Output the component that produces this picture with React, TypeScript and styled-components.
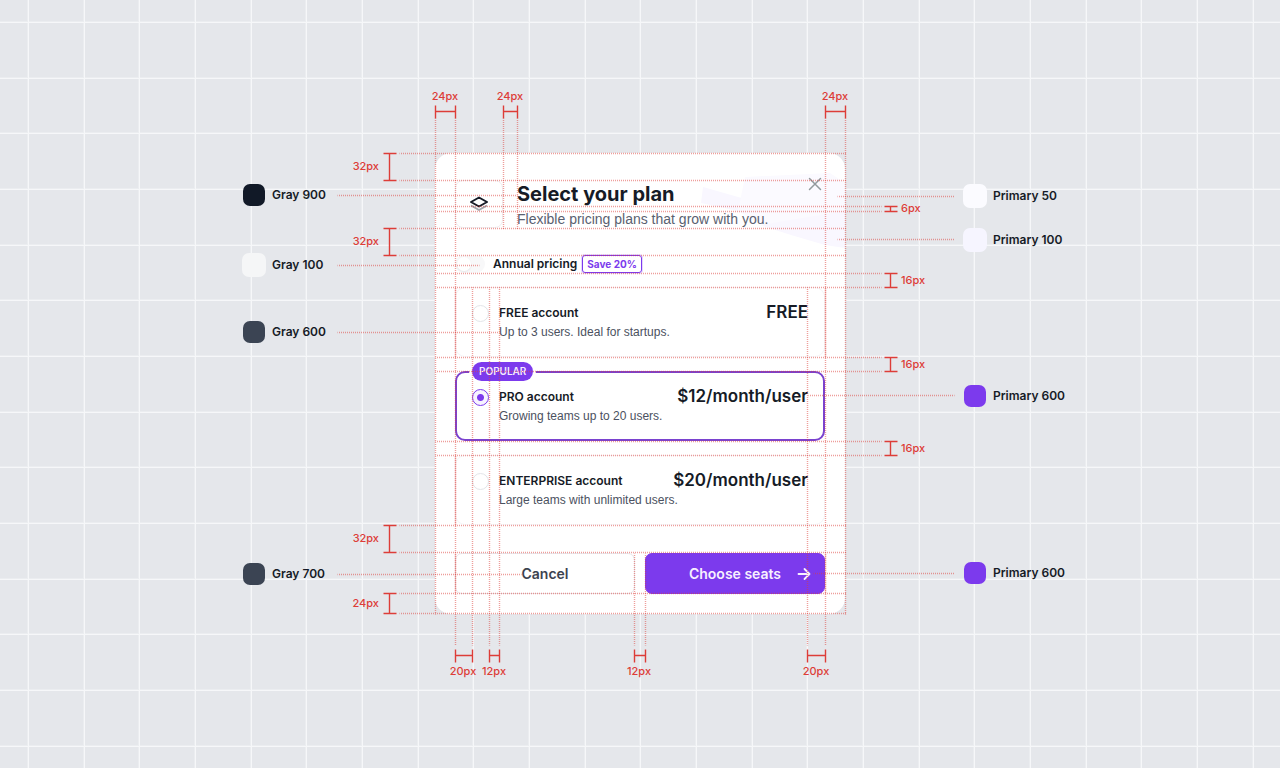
import React from "react";
import styled, { createGlobalStyle } from "styled-components";

const red = "#dd3d38";
const purple = "#7c3aed";
const ink = "#161b26";

const GlobalStyle = createGlobalStyle`
  *, *::before { box-sizing: border-box; }
  body {
    margin: 0;
    background: #e5e7eb;
    color: ${ink};
    font-family: Inter, "Liberation Sans", sans-serif;
  }
  button, input { font: inherit; margin: 0; }
`;

const Page = styled.main`
  position: relative;
  display: flex;
  align-items: center;
  justify-content: center;
  min-height: 100vh;
  padding-bottom: 1px;
  overflow: hidden;
`;

const Backdrop = styled.svg`
  position: absolute;
  inset: 0;
  width: 100%;
  height: 100%;
`;

const Artboard = styled.div`
  position: relative;
  width: 410px;
`;

const Card = styled.form`
  position: relative;
  display: flex;
  flex-direction: column;
  padding: 27px 20px 20px;
  border-radius: 16px;
  background: #fff;
  overflow: hidden;
`;

const Decoration = styled.svg`
  position: absolute;
  top: 0;
  right: 0;
  width: 160px;
  height: 130px;
`;

const Header = styled.header`
  position: relative;
  display: flex;
  gap: 14px;
  height: 48px;
`;

const IconTile = styled.div`
  display: flex;
  align-items: center;
  justify-content: center;
  width: 48px;
  height: 48px;
  border: 1px solid #f1eff1;
  border-radius: 8px;
`;

const Heading = styled.div`
  flex: 1;
  white-space: nowrap;
`;

const Title = styled.h1`
  margin: 0;
  font-size: 20px;
  font-weight: 700;
  line-height: 28px;
`;

const Subtitle = styled.p`
  margin: 0;
  color: #5a6170;
  font-family: "Liberation Sans", sans-serif;
  font-size: 14px;
  line-height: 22px;
`;

const CloseButton = styled.button`
  position: absolute;
  top: -4px;
  right: 2px;
  display: flex;
  padding: 0;
  border: 0;
  background: none;
`;

const BillingRow = styled.div`
  display: flex;
  align-items: center;
  height: 18px;
  margin-top: 27px;
`;

const Switch = styled.input`
  appearance: none;
  width: 30px;
  height: 18px;
  border-radius: 9px;
  background: #f8f8f9;

  &::before {
    content: "";
    display: block;
    width: 14px;
    height: 14px;
    margin: 2px;
    border-radius: 50%;
    background: #fff;
    box-shadow: 0 1px 2px #10182814;
  }
`;

const BillingLabel = styled.label`
  margin: 0 5px 0 8px;
  font-size: 12px;
  font-weight: 600;
  line-height: 20px;
`;

const SaveBadge = styled.span`
  height: 18px;
  padding: 0 4px;
  border: 1px solid ${purple};
  border-radius: 3px;
  box-shadow: 0 0 0 1px #7c3aed33;
  color: ${purple};
  font-size: 10px;
  font-weight: 700;
  line-height: 16px;
`;

const Plans = styled.fieldset`
  display: flex;
  flex-direction: column;
  gap: 14px;
  min-width: 0;
  margin: 14px 0 0;
  padding: 0;
  border: 0;
`;

const Plan = styled.label<{ $selected?: boolean }>`
  position: relative;
  display: flex;
  gap: 10px;
  height: 70px;
  padding: 16px 17px;
  border-radius: 10px;
  box-shadow: inset 0 0 0 ${(p) => (p.$selected ? `2px #7a42cf` : "1px #f6f6f8")};
`;

const Radio = styled.input`
  appearance: none;
  flex: none;
  align-self: flex-start;
  width: 17px;
  height: 19px;
  padding-top: 2px;

  &::before {
    content: "";
    display: block;
    width: 17px;
    height: 17px;
    border: 1px solid #e3e5e9;
    border-radius: 50%;
    background: #fff;
  }

  &:checked::before {
    border-color: ${purple};
    background: radial-gradient(circle, ${purple} 3px, #f7f3ff 4px);
  }
`;

const PlanText = styled.span`
  flex: 1;
  display: flex;
  flex-direction: column;
  min-width: 0;
  white-space: nowrap;
`;

const PlanName = styled.span`
  font-size: 12px;
  font-weight: 600;
  line-height: 19px;
`;

const PlanNote = styled.span`
  color: #4b5160;
  font-family: "Liberation Sans", sans-serif;
  font-size: 12px;
  line-height: 21px;
`;

const Price = styled.strong`
  font-size: 17px;
  font-weight: 600;
  line-height: 18px;
`;

const PopularBadge = styled.span`
  position: absolute;
  top: -9px;
  left: 17px;
  padding: 0 7px;
  border-radius: 10px;
  background: ${purple};
  box-shadow: 0 0 0 3px #fff;
  color: #f4ebff;
  font-size: 10px;
  font-weight: 600;
  line-height: 19px;
`;

const Actions = styled.div`
  display: grid;
  grid-template-columns: 1fr 1fr;
  gap: 10px;
  margin-top: 28px;
`;

const ActionButton = styled.button<{ $primary?: boolean }>`
  position: relative;
  display: flex;
  align-items: center;
  justify-content: center;
  height: 41px;
  padding: 0;
  border: 1px solid ${(p) => (p.$primary ? purple : "#e8e8ec")};
  border-radius: 7px;
  background: ${(p) => (p.$primary ? purple : "#fff")};
  color: ${(p) => (p.$primary ? "#f7f0ff" : "#3c4350")};
  font-size: 14px;
  font-weight: 600;
`;

const ArrowSlot = styled.span`
  position: absolute;
  right: 13px;
  display: flex;
`;

const Guides = styled.svg`
  position: absolute;
  inset: 0;
  width: 100%;
  height: 100%;
  overflow: visible;
  pointer-events: none;
`;

const Measure = styled.span<{ $x: number; $y: number; $anchor: string }>`
  position: absolute;
  left: ${(p) => p.$x}px;
  top: ${(p) => p.$y}px;
  transform: translate(${(p) => p.$anchor}, -50%);
  color: ${red};
  font-size: 11px;
  font-weight: 500;
  line-height: 14px;
`;

const Swatch = styled.div<{ $side: "left" | "right"; $y: number }>`
  position: absolute;
  left: ${(p) => (p.$side === "left" ? -193 : 528)}px;
  top: ${(p) => p.$y - 12}px;
  display: flex;
  align-items: center;
  gap: 6px;
  font-size: 12px;
  font-weight: 600;
  line-height: 24px;
  white-space: nowrap;
`;

const Chip = styled.span<{ $color: string; $light?: boolean }>`
  width: ${(p) => (p.$light ? 24 : 22)}px;
  height: ${(p) => (p.$light ? 24 : 22)}px;
  margin: ${(p) => (p.$light ? 0 : 1)}px;
  border-radius: 7px;
  background: ${(p) => p.$color};
`;

type Line = [number, number, number];

// Guides are [position, start, end], measured from the card's top left corner.
const verticals: Line[] = [
  [0, -35, 461], [20, -35, 492], [68, -35, 76], [82, -35, 76],
  [390, -35, 492], [410, -35, 461], [37, 134, 492], [54, 134, 492],
  [64, 134, 492], [199, 400, 492], [210, 400, 492], [372, 134, 492],
];
const horizontals: Line[] = [
  [0, -36, 411], [27, -36, 411], [53, 0, 446], [58, 0, 446],
  [75, -36, 411], [102, -36, 411], [120, 0, 446], [134, 0, 446],
  [204, 0, 446], [218, 0, 446], [288, 0, 446], [302, 0, 446],
  [372, -36, 411], [399, -36, 411], [440, -36, 411], [460, -36, 411],
];
const leaders: Line[] = [
  [42, -98, 82], [112, -98, 44], [179, -98, 64], [421, -98, 86],
  [43, 402, 519], [86, 402, 519], [242, 373, 519], [420, 378, 519],
];
const edges: Line[] = [
  [20, 134, 204], [20, 302, 372], [20, 400, 440],
  [390, 134, 204], [390, 400, 440],
];

type Span = { from: number; to: number; label: string };
const topSpans: Span[] = [
  { from: 0, to: 20, label: "24px" },
  { from: 68, to: 82, label: "24px" },
  { from: 390, to: 410, label: "24px" },
];
const bottomSpans: Span[] = [
  { from: 20, to: 37, label: "20px" },
  { from: 54, to: 64, label: "12px" },
  { from: 199, to: 210, label: "12px" },
  { from: 372, to: 390, label: "20px" },
];
const leftSpans: Span[] = [
  { from: 0, to: 27, label: "32px" },
  { from: 75, to: 102, label: "32px" },
  { from: 372, to: 399, label: "32px" },
  { from: 440, to: 460, label: "24px" },
];
const rightSpans: Span[] = [
  { from: 53, to: 58, label: "6px" },
  { from: 120, to: 134, label: "16px" },
  { from: 204, to: 218, label: "16px" },
  { from: 288, to: 302, label: "16px" },
];

const mid = (s: Span) => Math.floor((s.from + s.to) / 2);
const across = (s: Span, y: number) =>
  `M${s.from} ${y}H${s.to}M${s.from} ${y - 6}v13M${s.to} ${y - 6}v13`;
const down = (s: Span, x: number) =>
  `M${x} ${s.from}V${s.to}M${x - 6} ${s.from}h13M${x - 6} ${s.to}h13`;

const swatches = [
  { name: "Gray 900", color: "#111927", side: "left", y: 42 },
  { name: "Gray 100", color: "#f5f6f7", side: "left", y: 112, light: true },
  { name: "Gray 600", color: "#3b4453", side: "left", y: 179 },
  { name: "Gray 700", color: "#3b4453", side: "left", y: 421 },
  { name: "Primary 50", color: "#fbfbff", side: "right", y: 43, light: true },
  { name: "Primary 100", color: "#f6f5ff", side: "right", y: 87, light: true },
  { name: "Primary 600", color: purple, side: "right", y: 243 },
  { name: "Primary 600", color: purple, side: "right", y: 420 },
] as const;

const plans = [
  { id: "free", name: "FREE account", note: "Up to 3 users. Ideal for startups.", price: "FREE" },
  { id: "pro", name: "PRO account", note: "Growing teams up to 20 users.", price: "$12/month/user", popular: true },
  { id: "enterprise", name: "ENTERPRISE account", note: "Large teams with unlimited users.", price: "$20/month/user" },
];

const gridStops = Array.from({ length: 60 }, (_, i) => Math.round((i * 501) / 9));

function Grid() {
  return (
    <Backdrop aria-hidden="true">
      <g fill="#f6f7f9">
        {gridStops.map((s) => (
          <React.Fragment key={s}>
            <rect x={s + 28} y="0" width="1" height="100%" />
            <rect x="0" y={s + 22} width="100%" height="1" />
          </React.Fragment>
        ))}
      </g>
      <g fill="#f6f7f9" opacity="0.4">
        {gridStops.map((s) => (
          <React.Fragment key={s}>
            <rect x={s + 27} y="0" width="2" height="100%" />
            <rect x="0" y={s + 21} width="100%" height="2" />
          </React.Fragment>
        ))}
      </g>
    </Backdrop>
  );
}

function Annotations() {
  return (
    <>
      <Guides aria-hidden="true">
        <g transform="translate(0.5 0.5)" fill="none" stroke={red} strokeWidth="1.4">
          <g strokeDasharray="1 1" strokeDashoffset="0.5" strokeOpacity="0.5">
            {verticals.map(([x, a, b]) => <path key={`v${x}`} d={`M${x} ${a}V${b}`} />)}
            {horizontals.map(([y, a, b]) => <path key={`h${y}`} d={`M${a} ${y}H${b}`} />)}
            {leaders.map(([y, a, b]) => <path key={`l${y}${a}`} d={`M${a} ${y}H${b}`} />)}
          </g>
          <g strokeOpacity="0.25">
            {edges.map(([x, a, b]) => <path key={`e${x}${a}`} d={`M${x} ${a}V${b}`} />)}
          </g>
          {topSpans.map((s) => <path key={s.from} d={across(s, -42)} />)}
          {bottomSpans.map((s) => <path key={s.from} d={across(s, 502)} />)}
          {leftSpans.map((s) => <path key={s.from} d={down(s, -46)} />)}
          {rightSpans.map((s) => <path key={s.from} d={down(s, 455)} />)}
        </g>
      </Guides>
      {topSpans.map((s) => <Measure key={s.from} $x={mid(s)} $y={-57} $anchor="-50%">{s.label}</Measure>)}
      {bottomSpans.map((s) => <Measure key={s.from} $x={mid(s)} $y={518} $anchor="-50%">{s.label}</Measure>)}
      {leftSpans.map((s) => <Measure key={s.from} $x={-56} $y={mid(s)} $anchor="-100%">{s.label}</Measure>)}
      {rightSpans.map((s) => <Measure key={s.from} $x={466} $y={mid(s)} $anchor="0">{s.label}</Measure>)}
      {swatches.map((s) => (
        <Swatch key={s.side + s.y} $side={s.side} $y={s.y}>
          <Chip $color={s.color} $light={"light" in s} />
          {s.name}
        </Swatch>
      ))}
    </>
  );
}

export default function App() {
  return (
    <>
      <GlobalStyle />
      <Page>
        <Grid />
        <Artboard>
          <Card onSubmit={(e) => e.preventDefault()}>
            <Decoration viewBox="0 0 160 130" aria-hidden="true">
              <path d="M18 34L60 46L53 58L16 50Z" fill="#f9f7ff" />
              <path d="M60 24L145 20L160 30V75L80 73L53 58Z" fill="#fbfaff" />
              <path d="M75 72L160 58V95L140 92L106 82Z" fill="#f9f7ff" />
            </Decoration>
            <Header>
              <IconTile>
                <svg width="20" height="18" viewBox="0 0 20 18" fill="none" strokeWidth="2" strokeLinejoin="round" aria-hidden="true">
                  <path d="M2 10.5L10 15L18 10.5" stroke="#a3a6ac" />
                  <path d="M10 2.5L18 7L10 11.5L2 7Z" stroke={ink} fill="#fff" />
                </svg>
              </IconTile>
              <Heading>
                <Title>Select your plan</Title>
                <Subtitle>Flexible pricing plans that grow with you.</Subtitle>
              </Heading>
              <CloseButton type="button" aria-label="Close">
                <svg width="16" height="16" viewBox="0 0 16 16" fill="none" stroke="#929a9d" strokeWidth="1.5" strokeLinecap="round">
                  <path d="M2.5 2.5L13.5 13.5M13.5 2.5L2.5 13.5" />
                </svg>
              </CloseButton>
            </Header>
            <BillingRow>
              <Switch type="checkbox" role="switch" id="annual" />
              <BillingLabel htmlFor="annual">Annual pricing</BillingLabel>
              <SaveBadge>Save 20%</SaveBadge>
            </BillingRow>
            <Plans aria-label="Plan">
              {plans.map((p) => (
                <Plan key={p.id} $selected={p.popular}>
                  {p.popular && <PopularBadge>POPULAR</PopularBadge>}
                  <Radio type="radio" name="plan" value={p.id} defaultChecked={p.popular} />
                  <PlanText>
                    <PlanName>{p.name}</PlanName>
                    <PlanNote>{p.note}</PlanNote>
                  </PlanText>
                  <Price>{p.price}</Price>
                </Plan>
              ))}
            </Plans>
            <Actions>
              <ActionButton type="button">Cancel</ActionButton>
              <ActionButton type="submit" $primary>
                Choose seats
                <ArrowSlot>
                  <svg width="14" height="14" viewBox="0 0 14 14" fill="none" stroke="#f7f0ff" strokeWidth="1.8" strokeLinecap="round" strokeLinejoin="round" aria-hidden="true">
                    <path d="M1.5 7H12.5M7.5 2L12.5 7L7.5 12" />
                  </svg>
                </ArrowSlot>
              </ActionButton>
            </Actions>
          </Card>
          <Annotations />
        </Artboard>
      </Page>
    </>
  );
}
